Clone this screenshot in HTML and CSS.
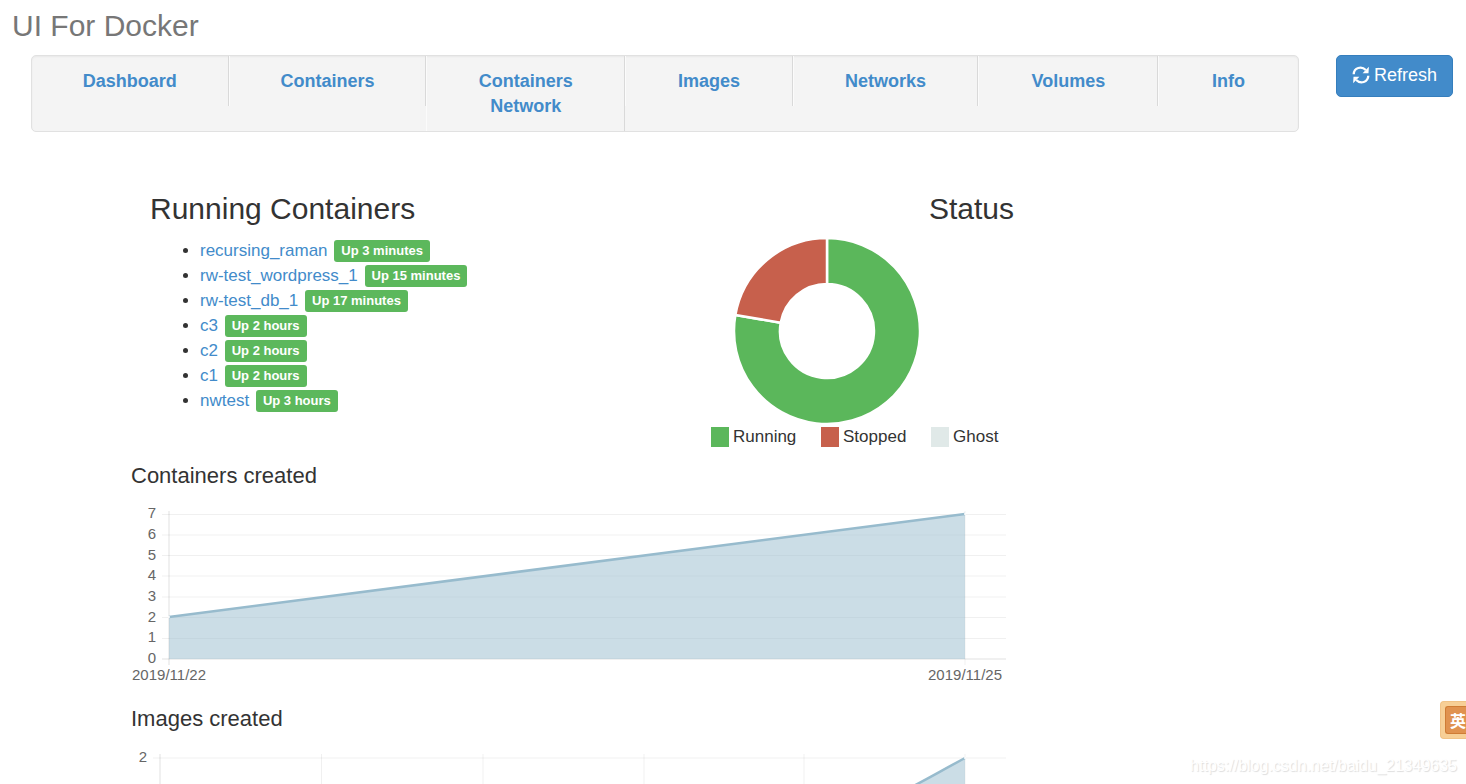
FILE: index.html
```html
<!DOCTYPE html>
<html lang="en">
<head>
<meta charset="utf-8">
<title>UI For Docker</title>
<link rel="stylesheet" href="styles.css">
</head>
<body>
<header class="masthead">
  <h3 class="brand">UI For Docker</h3>
  <div class="bar">
    <nav class="nav">
      <a href="#">Dashboard</a>
      <a href="#">Containers</a>
      <a href="#">Containers Network</a>
      <a href="#">Images</a>
      <a href="#">Networks</a>
      <a href="#">Volumes</a>
      <a href="#">Info</a>
    </nav>
    <button class="refresh" type="button">
      <svg class="refresh-icon" viewBox="0 0 18 18" aria-hidden="true">
        <path d="M1.7 8.2C2 1.6 9.5-.4 13.8 4" fill="none" stroke="#fff" stroke-width="2.3"/>
        <path d="M16.9 .8L16.5 7.2H10.6z" fill="#fff"/>
        <path d="M16.3 9.8C16 16.4 8.5 18.4 4.2 14" fill="none" stroke="#fff" stroke-width="2.3"/>
        <path d="M1.1 17.2L1.5 10.8H7.4z" fill="#fff"/>
      </svg>
      Refresh
    </button>
  </div>
</header>

<main class="content">
  <div class="overview">
    <section>
      <h3>Running Containers</h3>
      <ul class="containers">
        <li><a href="#">recursing_raman</a> <span class="label">Up 3 minutes</span></li>
        <li><a href="#">rw-test_wordpress_1</a> <span class="label">Up 15 minutes</span></li>
        <li><a href="#">rw-test_db_1</a> <span class="label">Up 17 minutes</span></li>
        <li><a href="#">c3</a> <span class="label">Up 2 hours</span></li>
        <li><a href="#">c2</a> <span class="label">Up 2 hours</span></li>
        <li><a href="#">c1</a> <span class="label">Up 2 hours</span></li>
        <li><a href="#">nwtest</a> <span class="label">Up 3 hours</span></li>
      </ul>
    </section>
    <section class="status">
      <h3>Status</h3>
      <svg class="donut" viewBox="-116 -93 232 186" role="img" aria-label="Container status">
        <g stroke="#fff" stroke-width="2.5">
          <path fill="#5bb75b" d="M0-93A93 93 0 1 1-91.6-16.1L-46.3-8.2A47 47 0 1 0 0-47z"/>
          <path fill="#c7604c" d="M-91.6-16.1A93 93 0 0 1 0-93V-47A47 47 0 0 0-46.3-8.2z"/>
        </g>
      </svg>
      <ul class="legend">
        <li><span class="swatch running"></span>Running</li>
        <li><span class="swatch stopped"></span>Stopped</li>
        <li><span class="swatch ghost"></span>Ghost</li>
      </ul>
    </section>
  </div>

  <section class="history">
    <h4>Containers created</h4>
    <svg class="chart" viewBox="0 0 875 190">
      <g class="grid">
        <path d="M31 14.5H875M31 35H875M31 55.5H875M31 76H875M31 97H875M31 117.5H875M31 138.5H875M834 11V165"/>
        <path class="axis" d="M31 159H875M38 11V165"/>
      </g>
      <path class="area" d="M38 117L834 14V159H38z"/>
      <path class="line" d="M38 117L834 14"/>
      <circle class="dot" cx="38" cy="117" r="1"/><circle class="dot" cx="834" cy="14" r="1"/>
      <g class="ticks">
        <text x="25" y="18">7</text><text x="25" y="39">6</text><text x="25" y="60">5</text><text x="25" y="80">4</text>
        <text x="25" y="101">3</text><text x="25" y="122">2</text><text x="25" y="142">1</text><text x="25" y="163">0</text>
        <text x="75" y="180">2019/11/22</text><text x="871" y="180">2019/11/25</text>
      </g>
    </svg>
    <h4>Images created</h4>
    <svg class="chart" viewBox="0 0 875 190">
      <g class="grid">
        <path d="M22 15H875M190.5 11V165M352 11V165M513 11V165M673 11V165M834 11V165"/>
        <path class="axis" d="M22 159H875M29 11V165"/>
      </g>
      <path class="area" d="M29 87H673C740 70 780 44 834 15V159H29z"/>
      <path class="line" d="M29 87H673C740 70 780 44 834 15"/>
      <circle class="dot" cx="834" cy="15" r="1"/>
      <g class="ticks"><text x="16" y="19">2</text></g>
    </svg>
  </section>
</main>

<div class="watermark">https://blog.csdn.net/baidu_21349635</div>
<div class="ime"><span>英</span></div>
</body>
</html>
```
FILE: styles.css
```css
* { box-sizing: border-box; }
body {
  position: relative;
  height: 100vh;
  margin: 0;
  overflow: hidden;
  background: #fff;
  color: #333;
  font: 17px/25px "Liberation Sans", Arial, sans-serif;
}
a { color: #428bca; text-decoration: none; }
h3, h4 { margin: 0; font-weight: 400; }
h3 { font-size: 30px; line-height: 33px; }
h4 { font-size: 22px; line-height: 25px; }
ul { margin: 0; }

.brand { padding: 9px 12px 13px; color: #777; }
.bar {
  display: flex;
  align-items: flex-start;
  gap: 37px;
  padding: 0 13px 0 31px;
}
.nav {
  display: grid;
  flex: 1;
  grid-template-columns: 197fr 198fr 199fr 168fr 186fr 180fr 140fr;
  align-items: start;
  overflow: hidden;
  background: #f4f4f4;
  border: 1px solid #e1e1e1;
  border-radius: 5px;
  box-shadow: inset 0 1px 2px rgba(0, 0, 0, .05);
}
.nav a {
  padding: 13px 40px 12px;
  border-left: 1px solid #fbfbfb;
  border-right: 1px solid #d9d9d9;
  font-size: 18px;
  font-weight: 700;
  text-align: center;
}
.nav a:first-child { border-left: 0; }
.nav a:last-child { border-right: 0; }
.refresh {
  display: flex;
  align-items: center;
  gap: 4px;
  height: 42px;
  padding: 0 15px 2px;
  border: 1px solid #357ebd;
  border-radius: 5px;
  background: #428bca;
  color: #fff;
  font: inherit;
  font-size: 18px;
  white-space: nowrap;
}
.refresh-icon { width: 18px; height: 18px; }

.content {
  max-width: 1204px;
  margin: 0 auto;
  padding-top: 60px;
}
.overview {
  display: grid;
  grid-template-columns: 561px 303px;
  padding-left: 19px;
}
.containers { padding: 13px 0 0 50px; }
.label {
  display: inline-block;
  margin-left: 2px;
  padding: 0 7px;
  border-radius: 3px;
  background: #5cb85c;
  color: #fff;
  font-size: 13px;
  font-weight: 700;
  line-height: 22px;
  vertical-align: 1px;
}
.containers li { height: 25px; }
.status h3 { text-align: right; }
.donut { display: block; width: 232px; height: 186px; margin-top: 13px; }
.legend {
  display: flex;
  padding: 0;
  list-style: none;
}
.legend li {
  display: flex;
  flex: 0 0 110px;
  align-items: center;
  gap: 4px;
}
.swatch { width: 18px; height: 20px; }
.running { background: #5bb75b; }
.stopped { background: #c7604c; }
.ghost { background: #e0e9e8; }

.history { max-width: 875px; padding-top: 14px; }
.chart { display: block; width: 100%; margin: 12px 0 16px; }
.grid path { fill: none; stroke: rgba(0, 0, 0, .06); }
.grid .axis { stroke: rgba(0, 0, 0, .12); }
.area { fill: rgba(151, 187, 205, .5); }
.line { fill: none; stroke: #97bbcd; stroke-width: 2.5; }
.dot { fill: #fff; }
.ticks { fill: #666; font-size: 15px; text-anchor: end; }

.watermark {
  position: absolute;
  right: 9px;
  bottom: 6px;
  color: #fff;
  font-size: 16px;
  text-shadow: 1px 1px 1px #ddd;
}
.ime {
  position: absolute;
  right: 0;
  bottom: 45px;
  padding: 4px 0 4px 4px;
  border: 1px solid #f1c387;
  border-right: 0;
  border-radius: 4px 0 0 4px;
  background: #f7cf96;
}
.ime span {
  display: block;
  padding-left: 4px;
  border: 1px solid #cf7c35;
  border-right: 0;
  border-radius: 3px 0 0 3px;
  background: #e0924f;
  color: #fff;
  font: 700 16px/26px "Noto Sans CJK SC", sans-serif;
}
```
